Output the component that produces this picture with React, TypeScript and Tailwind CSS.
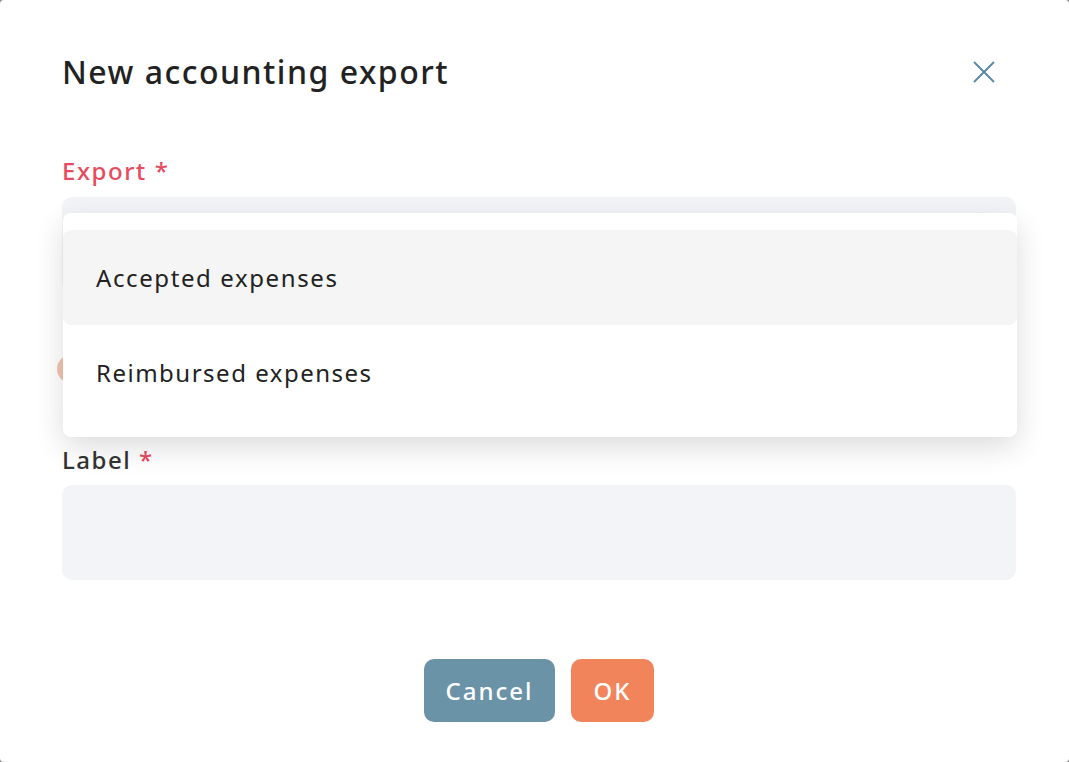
import React from "react";

export default function App() {
  return (
    <div
      className="w-[1069px] h-[762px] bg-[#8a8a8a] overflow-hidden"
      style={{ fontFamily: '"Noto Sans", "Open Sans", sans-serif' }}
    >
      <div className="relative w-full h-full bg-white rounded-[4px] pl-[62px] pr-[53px] pt-[50px]">
        <div className="flex items-center h-[44px]">
          <h1 className="text-[32px] font-medium text-[#222] tracking-[1.5px] leading-[44px]">New accounting export</h1>
        </div>
        <button className="absolute left-[973px] top-[61px] w-[22px] h-[22px] text-[#5a8aa0]">
          <svg width="22" height="22" viewBox="0 0 22 22" fill="none" stroke="currentColor" strokeWidth="2">
            <path d="M1 1 L21 21 M21 1 L1 21" />
          </svg>
        </button>

        <div className="mt-[61px] text-[24px] font-medium text-[#e84a5f] leading-[32px] tracking-[1.6px]">Export *</div>
        <div className="relative mt-[10px]">
          <div className="h-[95px] rounded-[10px] bg-[#f3f4f8]" />
          <div className="absolute left-[1px] right-[-1px] top-[16px] z-10 bg-white rounded-[8px] shadow-[0_10px_30px_rgba(0,0,0,0.14)] py-[17px] overflow-hidden">
            <div className="h-[95px] flex items-center px-[33px] bg-[#f5f5f5] rounded-[8px] text-[24px] text-[#222] tracking-[1.6px]">
              Accepted expenses
            </div>
            <div className="h-[95px] flex items-center px-[33px] text-[24px] text-[#222] tracking-[1.5px]">
              Reimbursed expenses
            </div>
          </div>
        </div>

        <div className="relative h-[62px]">
          <div className="absolute left-[-5px] top-[63px] w-[28px] h-[28px] rounded-full bg-[#f2c4b0]" />
        </div>

        <div className="mt-[90px] text-[24px] font-medium text-[#333] leading-[32px] tracking-[1.5px]">
          Label <span className="text-[#e84a5f]">*</span>
        </div>
        <div className="mt-[9px] h-[95px] rounded-[10px] bg-[#f3f4f8]" />

        <div className="mt-[79px] flex justify-center gap-[16px]">
          <button className="w-[131px] h-[63px] rounded-[10px] bg-[#6b93a7] text-white text-[24px] font-medium tracking-[2px]">
            Cancel
          </button>
          <button className="w-[83px] h-[63px] rounded-[10px] bg-[#f2845c] text-white text-[24px] font-medium tracking-[2px]">
            OK
          </button>
        </div>
      </div>
    </div>
  );
}
